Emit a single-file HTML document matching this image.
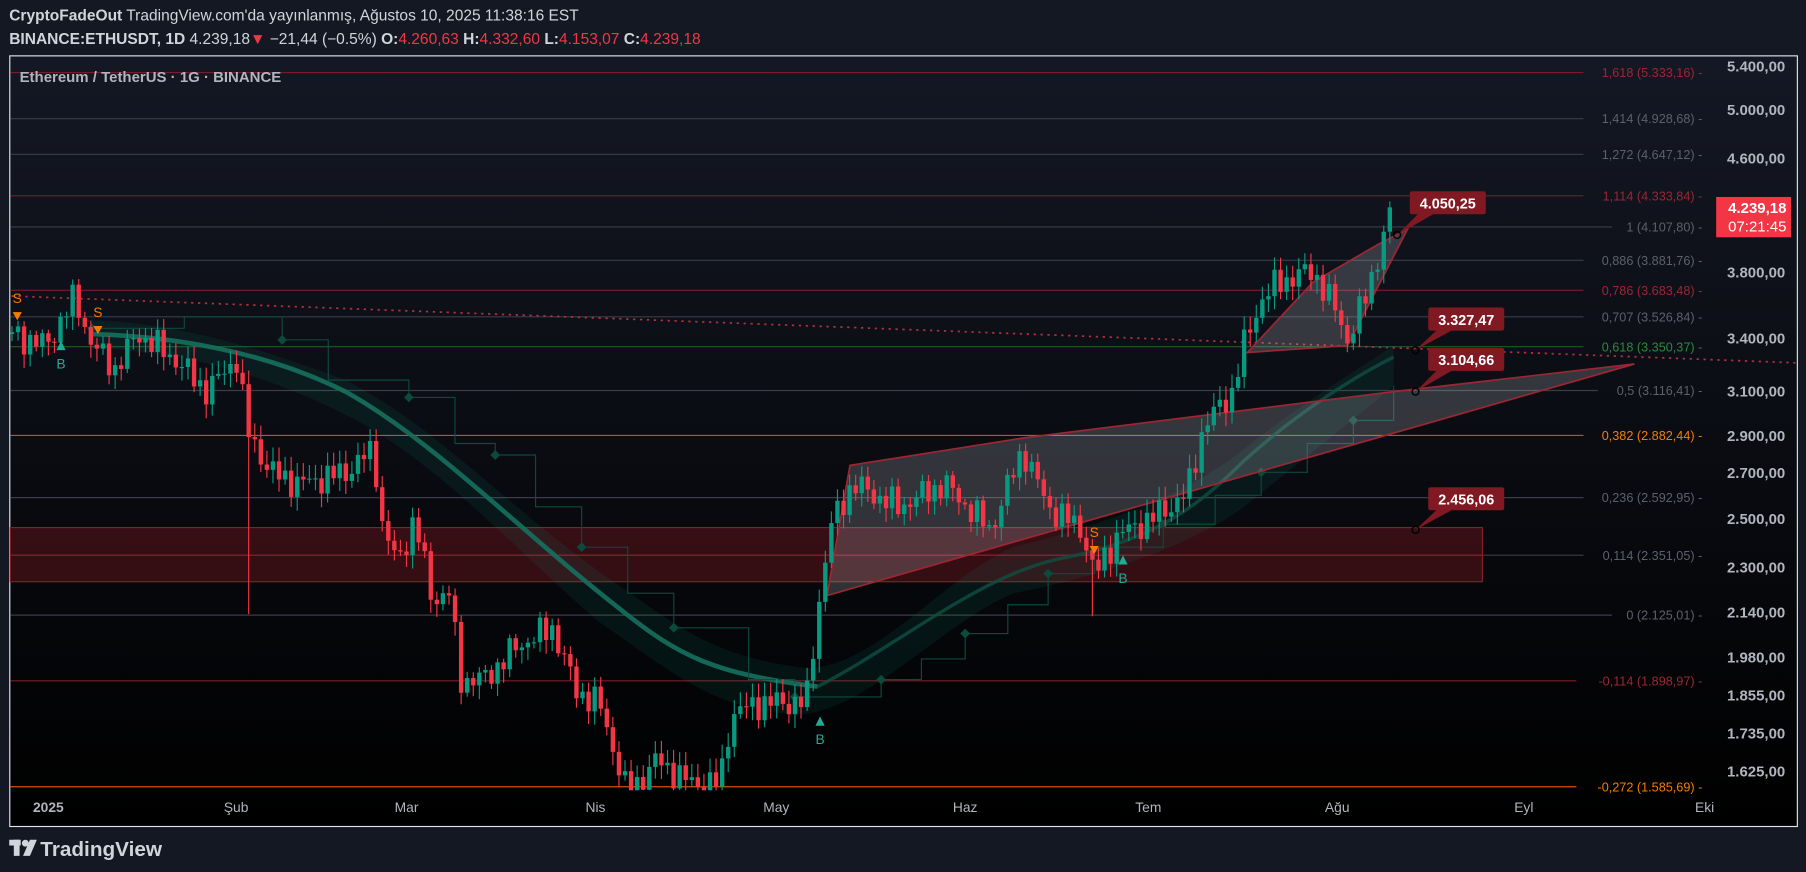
<!DOCTYPE html>
<html><head><meta charset="utf-8"><style>
html,body{margin:0;padding:0;background:#131722;width:1806px;height:872px;overflow:hidden}
svg{display:block}
text{font-family:"Liberation Sans",sans-serif}
</style></head><body>
<svg id="s" width="1806" height="872" viewBox="0 0 1568 757" preserveAspectRatio="none" xmlns="http://www.w3.org/2000/svg">
<defs>
<linearGradient id="bg" x1="0" y1="0" x2="0" y2="1"><stop offset="0" stop-color="#141824"/><stop offset="1" stop-color="#000"/></linearGradient>
<clipPath id="pc"><rect x="9" y="49" width="1550" height="637"/></clipPath>
</defs>
<rect width="1568" height="757" fill="#141822"/>
<text x="8" y="18" font-size="13.5" fill="#d1d4dc"><tspan font-weight="bold">CryptoFadeOut</tspan> TradingView.com'da yayınlanmış, Ağustos 10, 2025 11:38:16 EST</text>
<text x="8" y="38" font-size="13.5" fill="#d1d4dc"><tspan font-weight="bold">BINANCE:ETHUSDT, 1D</tspan> 4.239,18<tspan fill="#f23645">▼</tspan> −21,44 (−0.5%) <tspan font-weight="bold">O:</tspan><tspan fill="#f23645">4.260,63</tspan> <tspan font-weight="bold">H:</tspan><tspan fill="#f23645">4.332,60</tspan> <tspan font-weight="bold">L:</tspan><tspan fill="#f23645">4.153,07</tspan> <tspan font-weight="bold">C:</tspan><tspan fill="#f23645">4.239,18</tspan></text>
<rect x="8.5" y="48.5" width="1552" height="669" fill="url(#bg)" stroke="#e0e3eb" stroke-width="1"/>
<g id="fib"></g>
<rect x="9" y="458" width="1278" height="47" fill="rgba(140,25,35,0.35)" stroke="#8c1d27" stroke-width="1"/>
<line x1="9" y1="482" x2="1287" y2="482" stroke="#8c1d27" stroke-width="1"/>
<line x1="10" y1="257" x2="1560" y2="315" stroke="#b0303c" stroke-width="1.5" stroke-dasharray="2,4"/>
<g id="ema" clip-path="url(#pc)"></g>
<polygon points="718,517 738,404 890,380 1210,340 1419,316" fill="rgba(200,200,210,0.22)" stroke="#9b2733" stroke-width="1.5"/>
<polygon points="1083,306 1170,300 1222,199 1195,213 1140,245" fill="rgba(200,200,210,0.22)" stroke="#9b2733" stroke-width="1.5"/>
<g id="cdl" clip-path="url(#pc)"></g>
<g id="lbl"></g>
<text font-size="12" fill="#b2b5be" font-weight="bold" text-anchor="middle" x="42" y="705">2025</text>
<g font-size="12" fill="#b2b5be" text-anchor="middle">
<text x="205" y="705">Şub</text><text x="353" y="705">Mar</text><text x="517" y="705">Nis</text><text x="674" y="705">May</text><text x="838" y="705">Haz</text><text x="997" y="705">Tem</text><text x="1161" y="705">Ağu</text><text x="1323" y="705">Eyl</text><text x="1480" y="705">Eki</text></g>
<text x="17" y="71" font-size="13" fill="#b2b5be" font-weight="bold">Ethereum / TetherUS · 1G · BINANCE</text>
<rect x="1490" y="171" width="65" height="35" fill="#f23645"/>
<text x="1551" y="185" font-size="13" fill="#fff" font-weight="bold" text-anchor="end">4.239,18</text>
<text x="1551" y="201" font-size="13" fill="#fff" text-anchor="end">07:21:45</text>
<g fill="#d1d4dc"><rect x="8" y="729" width="10" height="5"/><rect x="12" y="729" width="5" height="14"/><circle cx="22" cy="732" r="3"/><polygon points="26,729 32,729 26,743 20,743"/></g>
<text x="35" y="743" font-size="18" font-weight="bold" fill="#d1d4dc">TradingView</text>
</svg>
<script>
var NS="http://www.w3.org/2000/svg",s=document.getElementById('s');
function el(p,t,a,txt){var e=document.createElementNS(NS,t);for(var k in a)e.setAttribute(k,a[k]);if(txt)e.textContent=txt;document.getElementById(p).appendChild(e);return e;}
var pa=[["5.400,00",57],["5.000,00",95],["4.600,00",137],["3.800,00",236],["3.400,00",293],["3.100,00",339],["2.900,00",378],["2.700,00",410],["2.500,00",450],["2.300,00",492],["2.140,00",531],["1.980,00",570],["1.855,00",603],["1.735,00",636],["1.625,00",669]];
pa.forEach(function(p){el('lbl','text',{x:1550,y:p[1]+5,'font-size':13,fill:'#b2b5be','text-anchor':'end','font-weight':'bold'},p[0]);});
var fib=[["1,618 (5.333,16)",63,"#7a1c25","#9b2733"],["1,414 (4.928,68)",103,"#3a3d47","#5d606b"],["1,272 (4.647,12)",134,"#3a3d47","#5d606b"],["1,114 (4.333,84)",170,"#7a1c25","#9b2733"],["1 (4.107,80)",197,"#3a3d47","#5d606b"],["0,886 (3.881,76)",226,"#3a3d47","#5d606b"],["0,786 (3.683,48)",252,"#7a1c25","#9b2733"],["0,707 (3.526,84)",275,"#3a3d47","#5d606b"],["0,618 (3.350,37)",301,"#1e5b26","#2a8a3a"],["0,5 (3.116,41)",339,"#3a3d47","#5d606b"],["0,382 (2.882,44)",378,"#d45000","#f57c00"],["0,236 (2.592,95)",432,"#3a3d47","#5d606b"],["0,114 (2.351,05)",482,"#3a3d47","#5d606b"],["0 (2.125,01)",534,"#3a3d47","#5d606b"],["-0,114 (1.898,97)",591,"#7a1c25","#9b2733"],["-0,272 (1.585,69)",683,"#d45000","#f57c00"]];
fib.forEach(function(f){var w=f[0].length*6.2;el('fib','line',{x1:9,y1:f[1],x2:1474-w,y2:f[1],stroke:f[2],'stroke-width':1});el('fib','text',{x:1478,y:f[1]+4,'font-size':11,fill:f[3],'text-anchor':'end'},f[0]+" -");});
// ema band
el('ema','path',{d:"M80,278 C150,280 220,300 300,330 C380,370 450,450 540,510 C590,545 620,570 700,580 C760,580 820,500 880,475 C960,455 1030,430 1080,390 C1130,350 1180,320 1210,300 L1210,335 C1180,360 1130,400 1080,440 C1040,470 960,500 880,515 C820,540 760,610 700,620 C620,620 580,580 520,540 C450,480 380,400 300,360 C220,320 150,305 80,302 Z",fill:'rgba(8,153,129,0.10)'});
el('ema','path',{d:"M80,290 C150,292 230,305 300,340 C380,385 450,460 540,530 C590,570 620,585 710,596",fill:'none',stroke:'#16705e','stroke-width':4,opacity:0.9});
el('ema','path',{d:"M710,596 C780,560 850,500 920,485 C1000,470 1040,440 1080,400 C1130,355 1180,325 1210,310",fill:'none',stroke:'#0f4f42','stroke-width':3,opacity:0.8});
var st=[[80,285],[160,275],[245,295],[285,330],[355,345],[395,385],[430,395],[465,440],[505,475],[545,515],[585,545],[650,590],[690,605],[725,605],[765,590],[800,572],[838,550],[875,525],[910,498],[950,475],[1010,455],[1055,430],[1095,410],[1135,385],[1175,365],[1210,335]];
var sp="";st.forEach(function(p,i){if(i)sp+=" "+p[0]+","+st[i-1][1];sp+=" "+p[0]+","+p[1];});
el('ema','polyline',{points:sp,fill:'none',stroke:'#0c4a3c','stroke-width':1});
st.forEach(function(p,i){if(i%2==0)el('ema','rect',{x:p[0]-3,y:p[1]-3,width:6,height:6,fill:'#0c4a3c',transform:'rotate(45 '+p[0]+' '+p[1]+')'});});
var kp=[[10,290],[40,300],[65,258],[80,300],[100,320],[120,290],[150,310],[180,340],[205,310],[215,375],[235,410],[260,420],[300,410],[325,390],[330,450],[345,490],[360,450],[375,520],[390,515],[400,590],[420,590],[450,560],[480,545],[500,600],[520,610],[545,690],[570,660],[600,680],[625,680],[635,620],[660,610],[700,610],[712,515],[722,455],[740,420],[780,440],[820,420],[860,460],[888,390],[910,440],[940,460],[950,500],[970,465],[1000,450],[1030,430],[1045,370],[1070,340],[1080,300],[1095,260],[1110,245],[1140,235],[1160,270],[1170,295],[1185,260],[1200,210],[1207,180]];
function iy(x){for(var i=1;i<kp.length;i++){if(x<=kp[i][0]){var a=kp[i-1],b=kp[i],t=(x-a[0])/(b[0]-a[0]);return a[1]+t*(b[1]-a[1]);}}return 180;}
var prev=290;
for(var d=-6;d<=221;d++){var x=42+d*5.27;var c=iy(x)+Math.sin(d*2.7)*9+Math.sin(d*1.3)*6;if(d==221)c=180;var o=prev;prev=c;
var hi=Math.min(o,c)-3-Math.abs(Math.sin(d*3.1))*9,lw=Math.max(o,c)+3+Math.abs(Math.cos(d*2.3))*9;
if(d==33)lw=533;if(d==172)lw=535;
var col=c<o?'#089981':'#f23645';
el('cdl','line',{x1:x,y1:hi,x2:x,y2:lw,stroke:col,'stroke-width':1});
el('cdl','rect',{x:x-1.9,y:Math.min(o,c),width:3.8,height:Math.max(1,Math.abs(o-c)),fill:col});}
[["4.050,25",1224,166,1213,204],["3.327,47",1240,267,1229,304],["3.104,66",1240,302,1229,340],["2.456,06",1240,423,1229,460]].forEach(function(l){
el('lbl','polygon',{points:(l[1]+8)+","+(l[2]+19)+" "+(l[1]+22)+","+(l[2]+19)+" "+l[3]+","+l[4],fill:'#801922'});
el('lbl','rect',{x:l[1],y:l[2],width:66,height:20,rx:2,fill:'#801922'});
el('lbl','text',{x:l[1]+33,y:l[2]+15,'font-size':12.5,'font-weight':'bold',fill:'#fff','text-anchor':'middle'},l[0]);
el('lbl','circle',{cx:l[3],cy:l[4],r:3,fill:'none',stroke:'#000','stroke-width':1.2});});
[["S",15,263,"#f57c00"],["S",85,275,"#f57c00"],["S",950,466,"#f57c00"]].forEach(function(m){el('lbl','text',{x:m[1],y:m[2],'font-size':12,fill:m[3],'text-anchor':'middle'},m[0]);el('lbl','polygon',{points:(m[1]-4)+","+(m[2]+8)+" "+(m[1]+4)+","+(m[2]+8)+" "+m[1]+","+(m[2]+15),fill:m[3]});});
[["B",53,296],["B",712,622],["B",975,482]].forEach(function(m){el('lbl','polygon',{points:(m[1]-4)+","+(m[2]+8)+" "+(m[1]+4)+","+(m[2]+8)+" "+m[1]+","+m[2],fill:'#22ab94'});el('lbl','text',{x:m[1],y:m[2]+24,'font-size':12,fill:'#22ab94','text-anchor':'middle'},m[0]);});
</script>
</body></html>
